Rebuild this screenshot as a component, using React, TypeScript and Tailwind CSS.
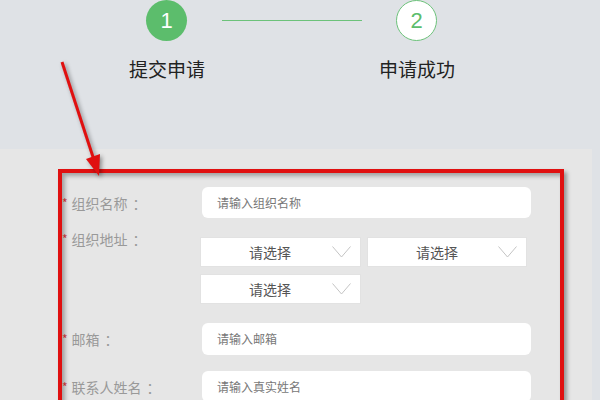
const font = { fontFamily: '"Noto Sans CJK SC", "Liberation Sans", sans-serif' };

const Chevron = () => (
  <svg width="19" height="12" viewBox="0 0 19 12" className="ml-auto mr-[9px]">
    <path d="M0.5 0.5 L9.5 11 L18.5 0.5" fill="none" stroke="#c4c4c4" strokeWidth="1" />
  </svg>
);

const Select = ({ width }: { width: string }) => (
  <div className={`${width} h-[30px] bg-white border border-[#e2e2e2] flex items-center`}>
    <span className="pl-[48px] text-[14px] text-[#555]">请选择</span>
    <Chevron />
  </div>
);

const Label = ({ text, width = "w-[140px]" }: { text: string; width?: string }) => (
  <div className={`${width} shrink-0 text-[14px] leading-[20px] text-[#999] flex items-center`}>
    <span className="text-[#b33] text-[12px] mr-[4px]">*</span>
    <span>{text}</span>
    <span className="ml-[5px]">：</span>
  </div>
);

const TextBox = ({ placeholder, height }: { placeholder: string; height: string }) => (
  <div className={`w-[329px] ${height} bg-white rounded-md pl-[15px] flex items-center text-[12px] text-[#777]`}>
    {placeholder}
  </div>
);

export default function App() {
  return (
    <div className="relative w-[600px] h-[400px] overflow-hidden bg-[#dfe2e6]" style={font}>
      {/* steps */}
      <div className="h-[149px]">
        <div className="flex items-center pl-[146px] font-['Liberation_Sans',sans-serif]">
          <div className="w-[41px] h-[41px] rounded-full bg-[#5cbd6c] text-white text-[22px] flex items-center justify-center">
            1
          </div>
          <div className="ml-[35px] w-[140px] h-px bg-[#6cc27a]" />
          <div className="ml-[34px] w-[41px] h-[41px] rounded-full border border-[#6cc27a] bg-white text-[#5cbd6c] text-[22px] flex items-center justify-center">
            2
          </div>
        </div>
        <div className="flex mt-[16px] text-[19px] leading-[24px] text-[#222]">
          <div className="ml-[117px] w-[100px] text-center">提交申请</div>
          <div className="ml-[150px] w-[100px] text-center">申请成功</div>
        </div>
      </div>

      {/* form panel */}
      <div className="w-[592px] h-[251px] bg-[#e6e6e6] pt-[20px] pl-[58px]">
        <div className="w-[506px] h-[260px] border-4 border-[#e01010] shadow-[3px_3px_4px_rgba(0,0,0,0.35),inset_3px_3px_4px_rgba(0,0,0,0.3)]">
          <div className="flex items-center mt-[14px]">
            <Label text="组织名称" />
            <TextBox placeholder="请输入组织名称" height="h-[31px]" />
          </div>

          <div className="flex items-start mt-[11px]">
            <Label text="组织地址" width="w-[138px]" />
            <div className="pt-[8px]">
              <div className="flex gap-[6px]">
                <Select width="w-[161px]" />
                <Select width="w-[160px]" />
              </div>
              <div className="flex mt-[7px]">
                <Select width="w-[161px]" />
              </div>
            </div>
          </div>

          <div className="flex items-center mt-[19px]">
            <Label text="邮箱" />
            <TextBox placeholder="请输入邮箱" height="h-[32px]" />
          </div>

          <div className="flex items-center mt-[16px]">
            <Label text="联系人姓名" />
            <TextBox placeholder="请输入真实姓名" height="h-[31px]" />
          </div>
        </div>
      </div>

      {/* annotation arrow */}
      <svg
        className="absolute left-0 top-0 pointer-events-none drop-shadow-[2px_2px_2px_rgba(0,0,0,0.4)]"
        width="600"
        height="400"
      >
        <line x1="62" y1="62" x2="94" y2="160" stroke="#e01010" strokeWidth="3" />
        <polygon points="99,176 86,159 100,154" fill="#e01010" />
      </svg>
    </div>
  );
}
